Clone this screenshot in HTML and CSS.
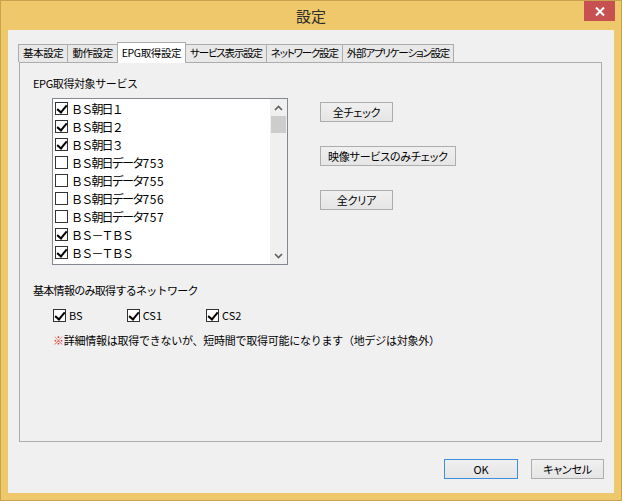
FILE: index.html
```html
<!DOCTYPE html>
<html>
<head>
<title>設定</title>
<meta charset="utf-8" />
<link rel="stylesheet" href="styles.css">
</head>
<body>
<div class="window">
	<div class="titleBar">
		<span></span>
		<div class="title">設定</div>
		<div class="closeButton">
			<svg width="10" height="9" viewBox="0 0 10 9"><path d="M1 0.5 L9 8.5 M9 0.5 L1 8.5" stroke="#fff" stroke-width="2"/></svg>
		</div>
	</div>
	<div class="client">
		<div class="tabs">
			<div class="tab">基本設定</div>
			<div class="tab">動作設定</div>
			<div class="tab selected">EPG取得設定</div>
			<div class="tab kana">サービス表示設定</div>
			<div class="tab kana">ネットワーク設定</div>
			<div class="tab kana">外部アプリケーション設定</div>
		</div>
		<div class="panel">
			<div class="groupLabel">EPG取得対象サービス</div>
			<div class="serviceRow">
				<div class="listBox">
					<div class="listItems">
						<div class="listItem"><span class="check on"></span>ＢＳ朝日１</div>
						<div class="listItem"><span class="check on"></span>ＢＳ朝日２</div>
						<div class="listItem"><span class="check on"></span>ＢＳ朝日３</div>
						<div class="listItem"><span class="check"></span>ＢＳ朝日データ<span class="num">753</span></div>
						<div class="listItem"><span class="check"></span>ＢＳ朝日データ<span class="num">755</span></div>
						<div class="listItem"><span class="check"></span>ＢＳ朝日データ<span class="num">756</span></div>
						<div class="listItem"><span class="check"></span>ＢＳ朝日データ<span class="num">757</span></div>
						<div class="listItem"><span class="check on"></span>ＢＳ－ＴＢＳ</div>
						<div class="listItem"><span class="check on"></span>ＢＳ－ＴＢＳ</div>
					</div>
					<div class="scrollBar">
						<div class="scrollArrow">
							<svg width="9" height="6" viewBox="0 0 9 6"><path d="M1 5 L4.5 1.5 L8 5" fill="none" stroke="#606060" stroke-width="1.6"/></svg>
						</div>
						<div class="scrollTrack"><div class="scrollThumb"></div></div>
						<div class="scrollArrow">
							<svg width="9" height="6" viewBox="0 0 9 6"><path d="M1 1 L4.5 4.5 L8 1" fill="none" stroke="#606060" stroke-width="1.6"/></svg>
						</div>
					</div>
				</div>
				<div class="sideButtons">
					<button class="btn">全チェック</button>
					<button class="btn">映像サービスのみチェック</button>
					<button class="btn">全クリア</button>
				</div>
			</div>
			<div class="groupLabel second">基本情報のみ取得するネットワーク</div>
			<div class="networkRow">
				<div class="netCheck"><span class="check on"></span>BS</div>
				<div class="netCheck"><span class="check on"></span>CS1</div>
				<div class="netCheck"><span class="check on"></span>CS2</div>
			</div>
			<div class="note"><span class="mark">※</span>詳細情報は取得できないが、短時間で取得可能になります（地デジは対象外）</div>
		</div>
		<div class="footer">
			<button class="btn default">OK</button>
			<button class="btn">キャンセル</button>
		</div>
	</div>
</div>
</body>
</html>
```

FILE: styles.css
```css
*{
	padding:0;
	margin:0;
	box-sizing:border-box;
}
body{
	background:#f0c86c;
	font-family:"Noto Sans CJK JP","Noto Sans",sans-serif;
	font-size:11px;
	color:#000;
}
.window{
	width:622px;
	height:501px;
	display:flex;
	flex-direction:column;
	border:1px solid #c9a24f;
	background:#f0c86c;
	padding:0 7px 7px 7px;
}
.titleBar{
	height:29px;
	display:grid;
	grid-template-columns:1fr auto 1fr;
}
.title{
	font-size:15px;
	color:#2b2b2b;
	line-height:30px;
}
.closeButton{
	justify-self:end;
	align-self:start;
	width:31px;
	height:20px;
	margin-right:-1px;
	background:#c75050;
	display:flex;
	align-items:center;
	justify-content:center;
}
.client{
	flex:1;
	background:#f0f0f0;
	display:flex;
	flex-direction:column;
	padding:12px 12px 13px 11px;
}
.tabs{
	display:flex;
	align-items:flex-end;
	height:20px;
	margin-left:-1px;
	position:relative;
	z-index:1;
}
.tab{
	height:18px;
	line-height:16px;
	padding:0 4px;
	border:1px solid #acacac;
	border-bottom:none;
	background:#e8e8e8;
	margin-right:-1px;
	font-size:10.5px;
	font-feature-settings:"palt";
	letter-spacing:-0.4px;
}
.tab.kana{
	letter-spacing:-1.2px;
}
.tab.selected{
	height:21px;
	margin-bottom:-1px;
	line-height:19px;
	background:#fff;
	position:relative;
}
.panel{
	height:380px;
	border:1px solid #acacac;
	padding:12px 0 0 13px;
}
.groupLabel{
	line-height:16px;
	letter-spacing:-0.4px;
}
.groupLabel.second{
	margin-top:17px;
	letter-spacing:-0.7px;
}
.serviceRow{
	display:flex;
	align-items:flex-start;
	margin:7px 0 0 19px;
}
.listBox{
	width:236px;
	height:167px;
	border:1px solid #828790;
	background:#fff;
	display:flex;
}
.listItems{
	flex:1;
	padding:0 0 0 2px;
}
.listItem{
	height:18px;
	display:flex;
	align-items:center;
	font-size:12px;
	letter-spacing:-1.8px;
	white-space:nowrap;
}
.listItem .num{
	letter-spacing:0.6px;
}
.check{
	width:13px;
	height:13px;
	border:1px solid #333;
	background:#fff;
	position:relative;
	margin-right:3px;
	flex:none;
}
.check.on::after{
	content:"";
	position:absolute;
	left:3px;
	top:0;
	width:4px;
	height:8px;
	border:solid #000;
	border-width:0 2px 2px 0;
	transform:rotate(40deg);
}
.scrollBar{
	width:17px;
	background:#f0f0f0;
	display:flex;
	flex-direction:column;
}
.scrollArrow{
	height:17px;
	display:flex;
	align-items:center;
	justify-content:center;
}
.scrollTrack{
	flex:1;
	padding:0 1px;
}
.scrollThumb{
	height:17px;
	background:#cdcdcd;
}
.sideButtons{
	display:flex;
	flex-direction:column;
	align-items:flex-start;
	gap:24px;
	margin:4px 0 0 32px;
}
.btn{
	font-family:inherit;
	font-size:11px;
	height:20px;
	min-width:73px;
	padding:0 7px;
	border:1px solid #adadad;
	background:linear-gradient(#f0f0f0,#e5e5e5);
	color:#000;
	font-feature-settings:"palt";
	letter-spacing:-0.2px;
}
.btn.default{
	border-color:#3c8fe0;
	min-width:74px;
}
.networkRow{
	display:flex;
	gap:44px;
	margin:9px 0 0 20px;
	height:16px;
}
.netCheck{
	display:flex;
	align-items:center;
}
.note{
	margin:9px 0 0 20px;
	line-height:16px;
	letter-spacing:-0.25px;
}
.note .mark{
	color:#e03030;
}
.footer{
	display:flex;
	justify-content:flex-end;
	gap:13px;
	margin:17px -2px 0 0;
}
```
